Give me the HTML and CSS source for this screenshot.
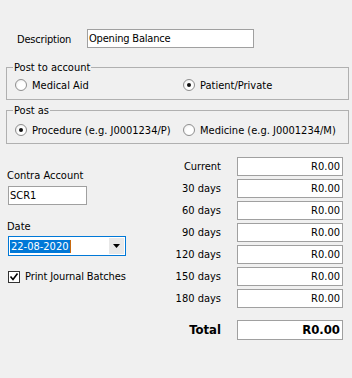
FILE: index.html
```html
<!DOCTYPE html>
<html>
<head>
<meta charset="utf-8">
<link rel="stylesheet" href="styles.css">
</head>
<body>
<div class="dlg">
  <div class="desc-row">
    <span class="desc-lbl">Description</span>
    <div class="tb desc-tb">Opening Balance</div>
  </div>

  <fieldset class="grp grp1">
    <legend>Post to account</legend>
    <div class="radios">
      <label class="rad rad-first"><span class="rb"></span><span class="rt">Medical Aid</span></label>
      <label class="rad"><span class="rb on"></span><span class="rt">Patient/Private</span></label>
    </div>
  </fieldset>

  <fieldset class="grp grp2">
    <legend>Post as</legend>
    <div class="radios">
      <label class="rad rad-first"><span class="rb on"></span><span class="rt">Procedure (e.g. J0001234/P)</span></label>
      <label class="rad"><span class="rb"></span><span class="rt">Medicine (e.g. J0001234/M)</span></label>
    </div>
  </fieldset>

  <div class="bottom">
    <div class="left">
      <div class="lbl">Contra Account</div>
      <div class="tb contra-tb">SCR1</div>
      <div class="lbl date-lbl">Date</div>
      <div class="combo">
        <span class="sel">22-08-2020</span><span class="caret"></span>
        <span class="ddbtn"><svg width="7" height="4" viewBox="0 0 7 4"><path d="M0 0H7L3.5 4Z" fill="#000"/></svg></span>
      </div>
      <label class="chk-row"><span class="chk"><svg width="10" height="10" viewBox="0 0 10 10"><path d="M1.5 4.5L4 7.5L8.5 1.5" fill="none" stroke="#000" stroke-width="1.6"/></svg></span>Print Journal Batches</label>
    </div>

    <div class="right">
      <div class="rl">Current</div><div class="tb val">R0.00</div>
      <div class="rl">30 days</div><div class="tb val">R0.00</div>
      <div class="rl">60 days</div><div class="tb val">R0.00</div>
      <div class="rl">90 days</div><div class="tb val">R0.00</div>
      <div class="rl">120 days</div><div class="tb val">R0.00</div>
      <div class="rl">150 days</div><div class="tb val">R0.00</div>
      <div class="rl">180 days</div><div class="tb val">R0.00</div>
      <div class="rl total-lbl">Total</div><div class="tb val total-val">R0.00</div>
    </div>
  </div>
</div>
</body>
</html>
```

FILE: styles.css
```css
* { box-sizing: border-box; }
html, body { margin: 0; padding: 0; }
body {
  background: #f0f0f0;
  font-family: "DejaVu Sans Condensed", "DejaVu Sans", sans-serif;
  font-size: 11px;
  line-height: 13px;
  color: #000;
  width: 352px;
  height: 378px;
  overflow: hidden;
}
.dlg { padding-top: 29px; }

.desc-row { display: flex; align-items: center; height: 19px; padding-left: 17px; }
.desc-lbl { width: 70px; padding-top: 2px; letter-spacing: -0.2px; }

.tb {
  height: 19px;
  border: 1px solid #a0a0a0;
  background: #fff;
  line-height: 17px;
  padding: 0 1px;
  white-space: nowrap;
}
.desc-tb { width: 167px; letter-spacing: -0.2px; }

.grp {
  margin: 12px 3px 0 6px;
  padding: 0;
  border: 1px solid #b0b0b0;
  min-width: 0;
}
.grp legend { margin-left: 6px; padding: 0 1px; line-height: 15px; }
.grp2 { margin-top: 3px; }
.radios { display: flex; align-items: center; height: 17px; padding-left: 8px; }
.grp1 .radios { margin: 1px 0 6px; }
.grp2 .radios { margin: 3px 0 5px; }
.rad { display: flex; align-items: center; }
.rt { padding-top: 2px; }
.rad-first { width: 168px; }
.rb {
  width: 12px; height: 12px;
  border: 1px solid #8f8f8f;
  border-radius: 50%;
  background: radial-gradient(circle at 60% 60%, #fff 40%, #e6e6e6 100%);
  margin-right: 5px;
  display: flex; align-items: center; justify-content: center;
}
.rb.on::after {
  content: ""; width: 4px; height: 4px; border-radius: 50%; background: #111;
}

.bottom { display: flex; margin-top: 13px; }
.left { width: 170px; padding-left: 7px; padding-top: 12px; }
.lbl { line-height: 13px; }
.contra-tb { width: 79px; margin: 4px 0 0 1px; }
.date-lbl { margin-top: 15px; }
.combo {
  width: 118px; height: 20px;
  margin: 3px 0 0 1px;
  border: 1px solid #0078d7;
  background: #fff;
  display: flex; align-items: center;
  padding-left: 1px;
}
.sel { background: #0078d7; color: #fff; height: 13px; line-height: 13px; padding: 0 1px; }
.caret { width: 1px; height: 13px; background: #c86a10; }
.ddbtn {
  margin-left: auto; margin-right: 1px;
  width: 15px; height: 16px;
  background: #e8e8e8;
  display: flex; align-items: center; justify-content: center;
}
.chk-row { display: flex; align-items: center; margin: 14px 0 0 1px; height: 13px; letter-spacing: -0.1px; }
.chk {
  width: 12px; height: 12px;
  border: 1px solid #333;
  background: #fff;
  margin-right: 5px;
  display: flex; align-items: center; justify-content: center;
}

.right {
  display: grid;
  grid-template-columns: 51px 106px;
  column-gap: 16px;
  row-gap: 3px;
  align-content: start;
}
.rl { text-align: right; line-height: 19px; white-space: nowrap; }
.val { text-align: right; padding-right: 2px; }
.total-lbl { margin-top: 9px; font-weight: bold; font-size: 13px; line-height: 20px; }
.total-val { margin-top: 9px; height: 20px; line-height: 18px; font-weight: bold; font-size: 13px; }
```
